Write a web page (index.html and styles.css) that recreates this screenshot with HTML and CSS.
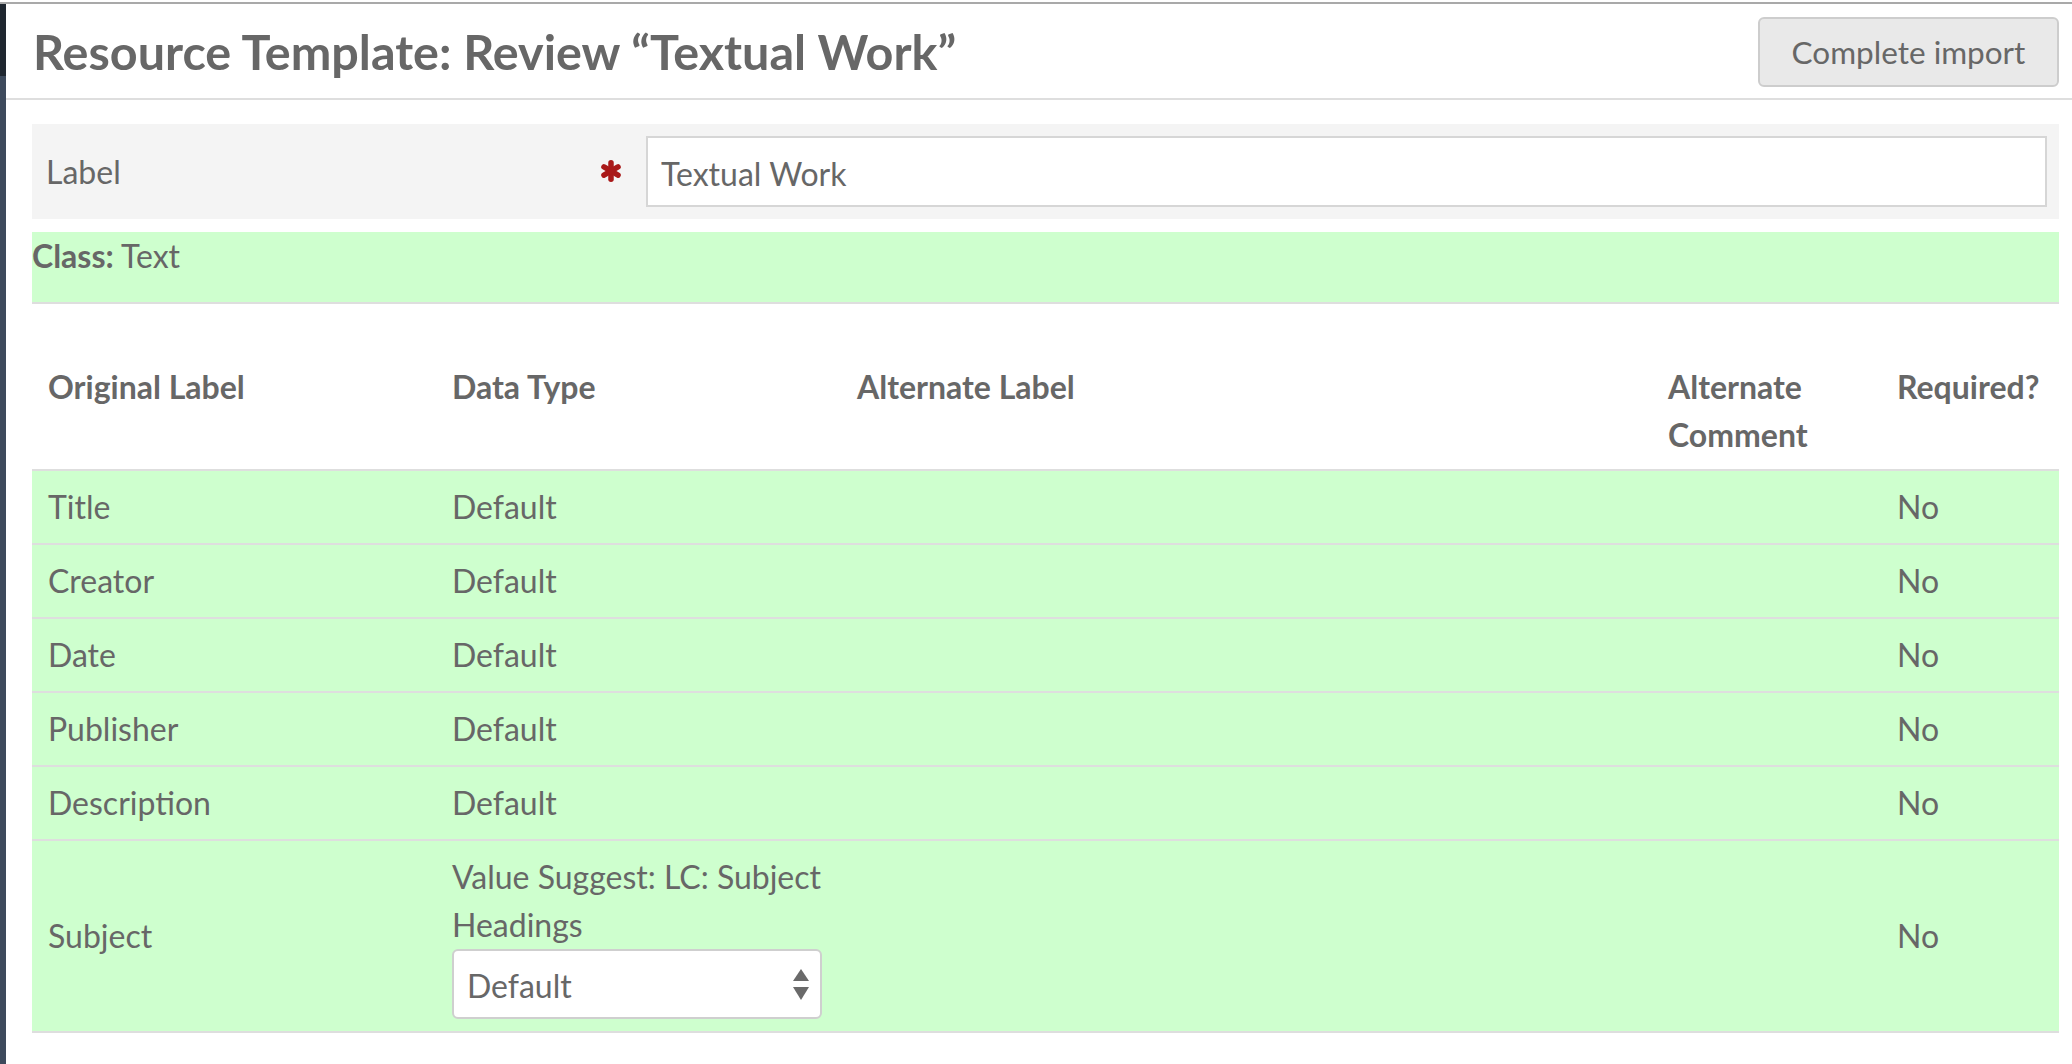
FILE: index.html
```html
<!DOCTYPE html>
<html lang="en">
<head>
<meta charset="utf-8">
<title>Resource Template: Review “Textual Work”</title>
<link rel="stylesheet" href="styles.css">
</head>
<body>
<div class="app">
  <div class="sidebar"><div class="sidebar-top"></div><div class="sidebar-rest"></div></div>
  <div class="main">
    <header class="page-header">
      <h1 class="page-title">Resource Template: Review “Textual Work”</h1>
      <button class="btn" type="button">Complete import</button>
    </header>
    <div class="content">
      <div class="field">
        <div class="field-meta">
          <label class="field-label" for="label">Label</label>
          <svg class="required" viewBox="0 0 20 20" aria-hidden="true"><g stroke="#a91919" stroke-width="5" stroke-linecap="round"><line x1="10" y1="2.6" x2="10" y2="17.4"/><line x1="3.6" y1="6.3" x2="16.4" y2="13.7"/><line x1="3.6" y1="13.7" x2="16.4" y2="6.3"/></g></svg>
        </div>
        <div class="field-input"><input id="label" class="text-input" type="text" value="Textual Work"></div>
      </div>
      <div class="class-row"><strong>Class:</strong> Text</div>
      <table class="props">
        <thead>
          <tr>
            <th class="c1">Original Label</th>
            <th class="c2">Data Type</th>
            <th class="c3">Alternate Label</th>
            <th class="c4">Alternate Comment</th>
            <th class="c5">Required?</th>
          </tr>
        </thead>
        <tbody>
          <tr><td>Title</td><td>Default</td><td></td><td></td><td>No</td></tr>
          <tr><td>Creator</td><td>Default</td><td></td><td></td><td>No</td></tr>
          <tr><td>Date</td><td>Default</td><td></td><td></td><td>No</td></tr>
          <tr><td>Publisher</td><td>Default</td><td></td><td></td><td>No</td></tr>
          <tr><td>Description</td><td>Default</td><td></td><td></td><td>No</td></tr>
          <tr>
            <td>Subject</td>
            <td>
              <div class="dt-name">Value Suggest: LC: Subject Headings</div>
              <div class="select-wrap">
                <select class="select"><option>Default</option></select>
                <svg class="select-arrows" viewBox="0 0 16 31" aria-hidden="true"><path d="M8 0 L16 12 L0 12 Z" fill="#6a6a6a"/><path d="M0 18 L16 18 L8 31 Z" fill="#6a6a6a"/></svg>
              </div>
            </td>
            <td></td><td></td><td>No</td>
          </tr>
        </tbody>
      </table>
    </div>
  </div>
</div>
</body>
</html>
```
FILE: styles.css
```css
* { box-sizing: border-box; }
html, body { margin: 0; padding: 0; background: #fff; }
body {
  font-family: Lato, "Open Sans", sans-serif;
  font-size: 32px;
  line-height: 48px;
  color: #676767;
}
.app {
  display: flex;
  margin-top: 2px;
  border-top: 2px solid #a9a9a9;
  min-height: 1060px;
}
.sidebar {
  width: 6px;
  flex: 0 0 6px;
  display: flex;
  flex-direction: column;
}
.sidebar-top { height: 72px; background: #1f2730; }
.sidebar-rest { flex: 1; background: #3d4a5c; }
.main { flex: 1; min-width: 0; }
.page-header {
  display: flex;
  align-items: center;
  justify-content: space-between;
  height: 96px;
  padding: 0 13px 0 27px;
  border-bottom: 2px solid #dedede;
}
.page-title {
  margin: 0;
  font-size: 48.5px;
  line-height: 64px;
  font-weight: 700;
  color: #676767;
}
.btn {
  font-family: Lato, sans-serif;
  font-size: 31.5px;
  color: #676767;
  background: #e9e9e9;
  border: 2px solid #cdcdcd;
  border-radius: 6px;
  height: 70px;
  width: 301px;
  padding: 0;
  margin-top: 2px;
}
.content { padding: 24px 13px 40px 26px; }
.field {
  display: flex;
  align-items: center;
  background: #f4f4f4;
  padding: 12px 12px 12px 14px;
}
.field-meta {
  width: 600px;
  flex: 0 0 600px;
  display: flex;
  align-items: center;
  justify-content: space-between;
  padding-right: 24px;
}
.field-label { font-size: 32px; }
.required { width: 22px; height: 22px; display: block; margin-top: -2px; }
.field-input { flex: 1; }
.text-input {
  display: block;
  width: 100%;
  height: 71px;
  border: 2px solid #d6d6d6;
  background: #fff;
  font-family: Lato, sans-serif;
  font-size: 32px;
  color: #676767;
  padding: 4px 13px 0;
  outline: none;
}
.class-row {
  margin-top: 13px;
  background: #ceffce;
  padding: 0 0 22px 0;
  border-bottom: 2px solid #dedede;
}
.class-row strong { font-weight: 700; }
.props {
  width: 100%;
  border-collapse: collapse;
  margin-top: 49px;
  table-layout: fixed;
}
.props th {
  text-align: left;
  vertical-align: top;
  font-weight: 700;
  padding: 10px 16px 10px 16px;
  border-bottom: 2px solid #dedede;
}
.props th.c1 { width: 404px; }
.props th.c2 { width: 405px; }
.props th.c3 { width: 811px; }
.props th.c4 { width: 229px; }
.props td {
  background: #ceffce;
  vertical-align: middle;
  padding: 12px 16px;
  border-bottom: 2px solid #dedede;
}
.select-wrap { position: relative; width: 370px; }
.select {
  -webkit-appearance: none;
  appearance: none;
  display: block;
  width: 370px;
  height: 70px;
  border: 2px solid #cfcfcf;
  border-radius: 6px;
  background: #fff;
  font-family: Lato, sans-serif;
  font-size: 32px;
  color: #676767;
  padding: 2px 40px 0 13px;
}
.select-arrows {
  position: absolute;
  right: 13px;
  top: 20px;
  width: 16px;
  height: 31px;
  pointer-events: none;
}
```
